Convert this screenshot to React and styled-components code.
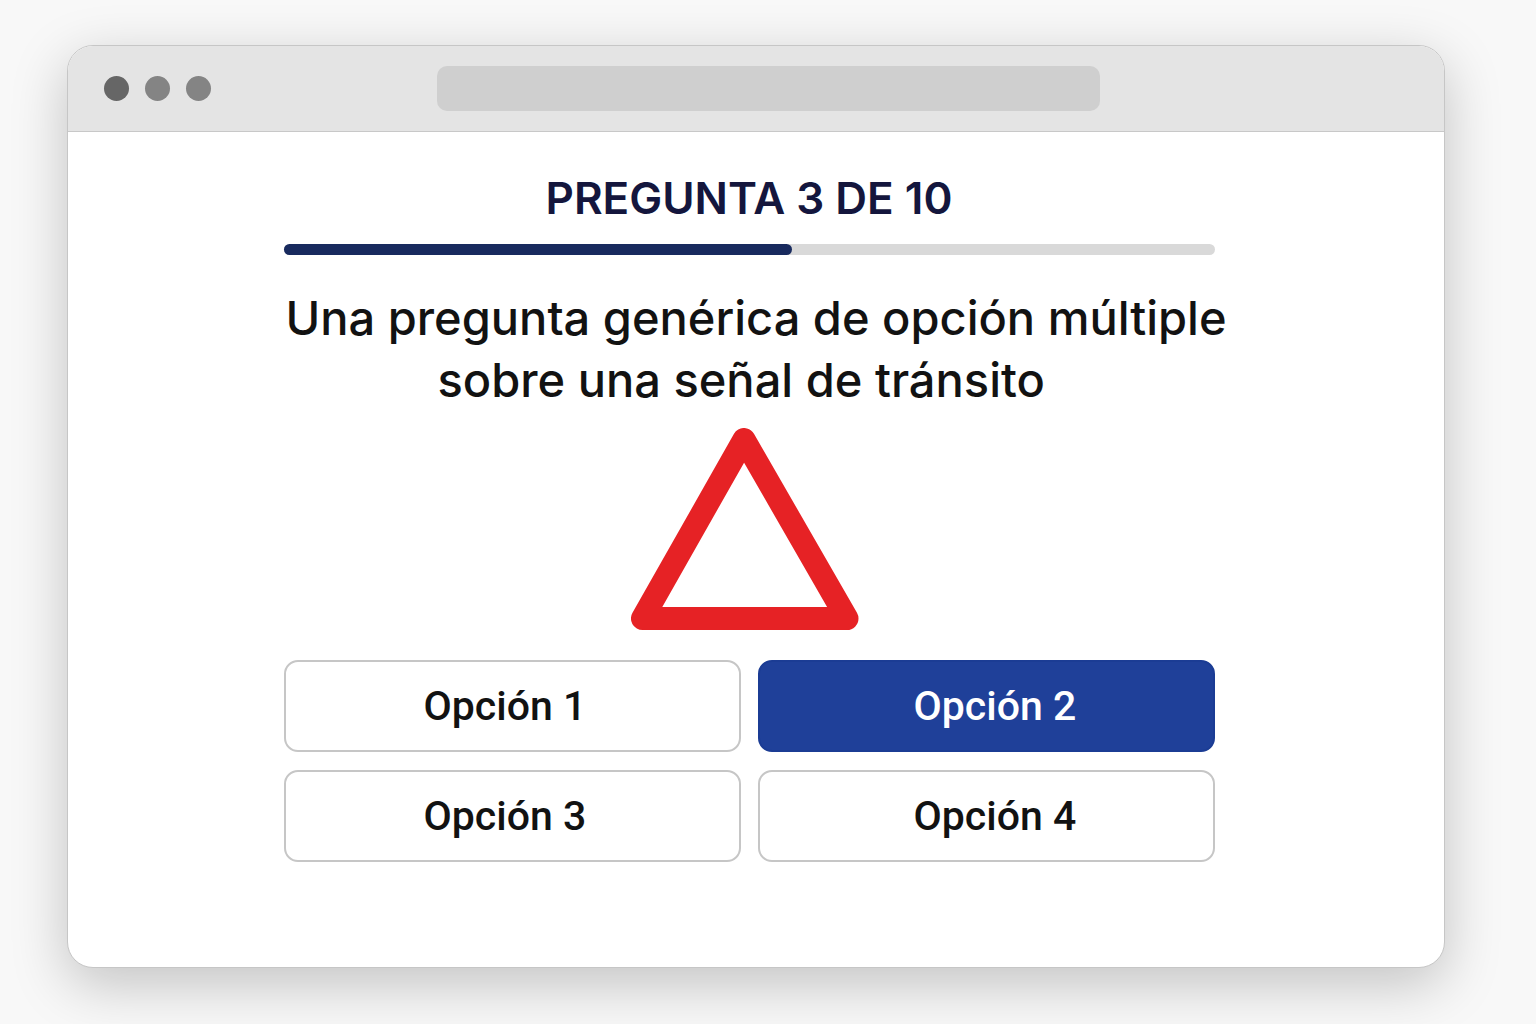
import React, { useState } from 'react'
import styled, { createGlobalStyle } from 'styled-components'

const options = ['Opción 1', 'Opción 2', 'Opción 3', 'Opción 4']

function App() {
  const [selected, setSelected] = useState(1)
  const progress = 54.6

  return (
    <Page>
      <GlobalStyle />
      <BrowserWindow>
        <TitleBar>
          <Dots>
            <Dot $dark />
            <Dot />
            <Dot />
          </Dots>
          <AddressBar type="text" aria-label="Dirección" />
        </TitleBar>
        <Content>
          <Quiz>
            <Counter>PREGUNTA 3 DE 10</Counter>
            <Track role="progressbar" aria-label="Progreso" aria-valuenow={3} aria-valuemin={0} aria-valuemax={10}>
              <Fill style={{ width: `${progress}%` }} />
            </Track>
            <Question>
              <Line>Una pregunta genérica de opción múltiple</Line>
              <Line $indent>sobre una señal de tránsito</Line>
            </Question>
            <Sign viewBox="0 0 236 202" role="img" aria-label="Señal de tránsito">
              <path d="M113 11.5 L11.5 190.5 H216 Z" />
            </Sign>
            <Options>
              {options.map((option, i) => (
                <Option
                  key={option}
                  type="button"
                  $active={i === selected}
                  aria-pressed={i === selected}
                  onClick={() => setSelected(i)}
                >
                  {option}
                </Option>
              ))}
            </Options>
          </Quiz>
        </Content>
      </BrowserWindow>
    </Page>
  )
}

export default App

const GlobalStyle = createGlobalStyle`
  * {
    box-sizing: border-box;
  }
  body {
    margin: 0;
    background: #f8f8f8;
    font-family: Inter, "Liberation Sans", sans-serif;
  }
`

const Page = styled.div`
  display: flex;
  min-height: 100vh;
  padding: 45px 91px 56px 67px;
  overflow: hidden;
`

const BrowserWindow = styled.main`
  flex: 1;
  min-width: 0;
  display: flex;
  flex-direction: column;
  overflow: hidden;
  background: #fff;
  border: 1px solid #c6c6c6;
  border-radius: 26px;
  box-shadow: 0 16px 56px rgba(0, 0, 0, 0.22);
`

const TitleBar = styled.header`
  display: flex;
  align-items: center;
  gap: 226px;
  height: 86px;
  padding: 0 344px 0 36px;
  background: #e4e4e4;
  border-bottom: 1px solid #c8c8c8;
`

const Dots = styled.div`
  display: flex;
  gap: 16px;
`

const Dot = styled.span`
  width: 25px;
  height: 25px;
  border-radius: 50%;
  background: ${({ $dark }) => ($dark ? '#666' : '#848484')};
`

const AddressBar = styled.input`
  flex: 1;
  min-width: 0;
  height: 45px;
  padding: 0 16px;
  border: none;
  border-radius: 10px;
  background: #cfcfcf;
  font: inherit;
`

const Content = styled.div`
  display: flex;
  justify-content: center;
  padding: 40px 14px 40px 0;
`

const Quiz = styled.section`
  width: 100%;
  max-width: 931px;
`

const Counter = styled.h1`
  margin: 0 0 20px;
  font-size: 44px;
  font-weight: 600;
  line-height: 52px;
  text-align: center;
  color: #14163d;
`

const Track = styled.div`
  height: 11px;
  margin-bottom: 32px;
  border-radius: 6px;
  background: #d9d9d9;
`

const Fill = styled.div`
  height: 100%;
  border-radius: 6px;
  background: #182a5e;
`

const Question = styled.h2`
  margin: 0 0 17px;
  font-size: 47px;
  font-weight: 500;
  line-height: 62px;
  color: #121212;
  white-space: nowrap;
`

const Line = styled.span`
  display: block;
  padding-left: ${({ $indent }) => ($indent ? '154px' : '2px')};
`

const Sign = styled.svg`
  display: block;
  width: 236px;
  height: 202px;
  margin: 0 auto 30px;
  fill: none;
  stroke: #e62225;
  stroke-width: 23;
  stroke-linejoin: round;
`

const Options = styled.div`
  display: grid;
  grid-template-columns: 1fr 1fr;
  gap: 18px 17px;
`

const Option = styled.button`
  height: 92px;
  padding: 0 0 0 138px;
  border: 2px solid ${({ $active }) => ($active ? '#1b3c94' : '#c6c6c6')};
  border-radius: 14px;
  background: ${({ $active }) => ($active ? '#1f4099' : '#fff')};
  color: ${({ $active }) => ($active ? '#fff' : '#121212')};
  font-family: Roboto, "Liberation Sans", sans-serif;
  font-size: 41px;
  font-weight: 500;
  text-align: left;
  cursor: pointer;
  &:nth-child(even) {
    padding-left: 154px;
  }
`
